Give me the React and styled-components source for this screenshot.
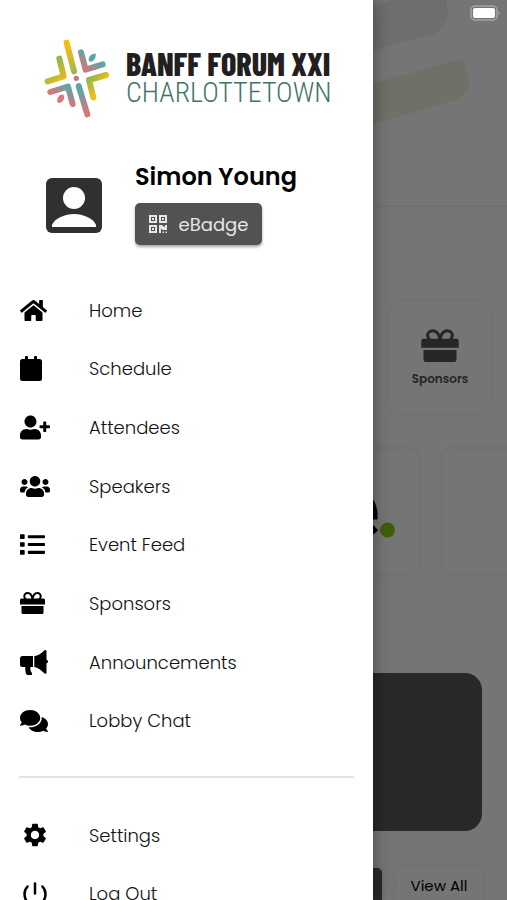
import React from "react";
import styled, { createGlobalStyle } from "styled-components";
import { FaHome, FaUserPlus, FaUsers, FaList, FaComments } from "react-icons/fa";
import { MdSettings } from "react-icons/md";

const GlobalStyle = createGlobalStyle`
  * { box-sizing: border-box; }
  body {
    margin: 0;
    background: #ffffff;
    color: #000000;
    font-family: Poppins, Inter, "Open Sans", sans-serif;
  }
  button, a { font: inherit; color: inherit; }
`;

const Screen = styled.div`
  position: relative;
  height: 100vh;
  overflow: hidden;
`;

/* Event page under the scrim */

const Page = styled.main`
  display: flex;
  flex-direction: column;
  height: 100%;
  overflow: hidden;
`;

const Banner = styled.header`
  display: flex;
  justify-content: flex-end;
  flex: none;
  height: 207px;
  padding-right: 36px;
  border-bottom: 2px solid #f7f7f7;
`;

const Tiles = styled.section`
  display: flex;
  justify-content: flex-end;
  flex: none;
  padding: 95px 17px 0 0;
`;

const Tile = styled.button`
  display: flex;
  flex-direction: column;
  align-items: center;
  justify-content: center;
  gap: 9px;
  width: 100px;
  height: 110px;
  padding: 2px 0 0;
  border: 0;
  border-radius: 10px;
  background: #ffffff;
  box-shadow: 0 0 8px rgba(0, 0, 0, 0.07);
  color: #545454;
  font-size: 12px;
  font-weight: 600;
  line-height: 16px;
`;

const Partners = styled.section`
  display: flex;
  justify-content: flex-end;
  gap: 25px;
  flex: none;
  margin: 37px -110px 0 0;
`;

const Partner = styled.div`
  display: flex;
  align-items: center;
  justify-content: flex-end;
  flex: none;
  width: 174px;
  height: 125px;
  padding: 18px 23px 0 0;
  border-radius: 10px;
  background: #ffffff;
  box-shadow: 0 0 8px rgba(0, 0, 0, 0.07);
`;

const Feature = styled.section`
  flex: none;
  height: 158px;
  margin: 99px 25px 0;
  border-radius: 17px;
  background: #595959;
`;

const Actions = styled.div`
  display: flex;
  justify-content: flex-end;
  gap: 14px;
  flex: none;
  margin: 37px 25px 0;
`;

const Action = styled.button`
  width: ${(p) => (p.$dark ? "120px" : "86px")};
  height: 36px;
  padding: 0;
  border: 0;
  border-radius: 5px;
  background: ${(p) => (p.$dark ? "#595959" : "#ffffff")};
  box-shadow: 0 0 8px rgba(0, 0, 0, 0.07);
  font-size: 15px;
  line-height: 20px;
`;

/* Layers over the page */

const Scrim = styled.div`
  position: absolute;
  inset: 0;
  background: rgba(0, 0, 0, 0.54);
`;

const Battery = styled.svg`
  position: absolute;
  top: 5px;
  right: 6px;
`;

const Drawer = styled.aside`
  position: absolute;
  top: 0;
  bottom: 0;
  left: 0;
  width: 373px;
  max-width: 85%;
  overflow: hidden;
  background: #ffffff;
  box-shadow: 0 0 16px rgba(0, 0, 0, 0.4);
`;

const Brand = styled.div`
  display: flex;
  align-items: center;
  gap: 16px;
  padding: 39px 0 0 43px;
`;

const BrandText = styled.div`
  padding-bottom: 2px;
  white-space: nowrap;
`;

const BrandName = styled.div`
  color: #231f20;
  font-family: "Barlow Condensed", "Roboto Condensed", "Liberation Sans Narrow", sans-serif;
  font-size: 32px;
  font-weight: 800;
  line-height: 30px;
`;

const BrandPlace = styled.div`
  color: #3f7467;
  font-family: "Roboto Condensed", "Liberation Sans Narrow", sans-serif;
  font-size: 28px;
  font-weight: 300;
  line-height: 30px;
`;

const Profile = styled.section`
  display: flex;
  align-items: flex-end;
  gap: 33px;
  padding: 42px 0 0 46px;
`;

const ProfileText = styled.div`
  display: flex;
  flex-direction: column;
  align-items: flex-start;
  gap: 9px;
`;

const Name = styled.h1`
  margin: 0;
  font-size: 24px;
  font-weight: 600;
  line-height: 34px;
`;

const BadgeButton = styled.button`
  display: flex;
  align-items: center;
  justify-content: center;
  gap: 12px;
  width: 127px;
  height: 42px;
  padding: 0;
  border: 0;
  border-radius: 5px;
  background: #525252;
  box-shadow: 0 2px 3px rgba(0, 0, 0, 0.35);
  && { color: #e6e6e6; }
  font-size: 18px;
  font-weight: 400;
`;

const Menu = styled.nav`
  display: grid;
  grid-auto-rows: 1fr;
  height: ${(p) => p.$height};
  margin-top: ${(p) => p.$top};
`;

const MenuLink = styled.a`
  display: grid;
  grid-template-columns: 69px 1fr;
  align-items: center;
  padding-left: 20px;
  color: #111111;
  font-size: 18px;
  font-weight: 300;
  text-decoration: none;
`;

const MenuIcon = styled.span`
  display: flex;
  justify-content: ${(p) => (p.$centered ? "center" : "flex-start")};
  width: 30px;
  color: #000000;
`;

const Divider = styled.hr`
  height: 2px;
  margin: 26px 19px 0;
  border: 0;
  background: #e4e4e4;
`;

const BrandMark = () => (
  <svg width="67" height="79" viewBox="38 28 201 237" fill="none" strokeWidth="18" strokeLinecap="round" strokeLinejoin="round" aria-hidden="true">
    <defs>
      <linearGradient id="ray-n" gradientUnits="userSpaceOnUse" x1="110" y1="60" x2="131" y2="125"><stop stopColor="#f2bb16" /><stop offset="1" stopColor="#9db94c" /></linearGradient>
      <linearGradient id="ray-nw" gradientUnits="userSpaceOnUse" x1="68" y1="105" x2="100" y2="145"><stop stopColor="#93b843" /><stop offset="1" stopColor="#e4bc22" /></linearGradient>
      <linearGradient id="ray-ne" gradientUnits="userSpaceOnUse" x1="190" y1="85" x2="164" y2="120"><stop stopColor="#5ca6a9" /><stop offset="1" stopColor="#d5757b" /></linearGradient>
      <linearGradient id="ray-se" gradientUnits="userSpaceOnUse" x1="177" y1="150" x2="207" y2="175"><stop stopColor="#97b84a" /><stop offset="1" stopColor="#ecbe18" /></linearGradient>
      <linearGradient id="ray-sw" gradientUnits="userSpaceOnUse" x1="113" y1="170" x2="90" y2="203"><stop stopColor="#5ca6a9" /><stop offset="1" stopColor="#d9767c" /></linearGradient>
      <linearGradient id="ray-s" gradientUnits="userSpaceOnUse" x1="145" y1="180" x2="171" y2="250"><stop stopColor="#5ca6a9" /><stop offset="1" stopColor="#db757a" /></linearGradient>
    </defs>
    <path stroke="url(#ray-n)" d="M109 39 131 125" />
    <path stroke="url(#ray-nw)" d="M87 87 100 140 52 155" />
    <path stroke="url(#ray-ne)" d="M152 68 166 120 217 104" />
    <path stroke="url(#ray-se)" d="M227 136 176 151 189 203" />
    <path stroke="url(#ray-sw)" d="M60 187 113 171 127 223" />
    <path stroke="url(#ray-s)" d="M145 169 171 254" />
    <circle cx="138" cy="146" r="8" fill="#c4797f" />
    <path fill="#5ca6a9" d="M175 92C174 79 184 71 196 72 198 84 190 97 179 96Z" />
    <path fill="#d9767c" d="M81 217C79 204 88 193 99 195 106 204 98 219 85 220Z" />
  </svg>
);

const Gift = ({ size }) => (
  <svg width={size} height={Math.round(size * 0.88)} viewBox="0 0 25 22" fill="currentColor" aria-hidden="true">
    <path d="M12.500 7.500C12 4 10.500 1.100 7.700 1.100 5.500 1.100 4 2.600 4.300 4.700 4.500 6 5.200 7 6 7.500M12.500 7.500C13 4 14.500 1.100 17.300 1.100 19.500 1.100 21 2.600 20.700 4.700 20.500 6 19.800 7 19 7.500" fill="none" stroke="currentColor" strokeWidth="2" />
    <path d="M1.500 6.500h22A1.500 1.500 0 0 1 25 8v4.500H0V8a1.500 1.500 0 0 1 1.500-1.500ZM1.500 14h22v6.500A1.500 1.500 0 0 1 22 22H3a1.500 1.500 0 0 1-1.500-1.500Z" />
  </svg>
);

const Calendar = () => (
  <svg width="22" height="25" viewBox="0 0 22 25" fill="currentColor" aria-hidden="true">
    <path d="M2.500 3H5V1a1 1 0 0 1 1-1h1a1 1 0 0 1 1 1v2h6V1a1 1 0 0 1 1-1h1a1 1 0 0 1 1 1v2h2.500A2.500 2.500 0 0 1 22 5.500v17A2.500 2.500 0 0 1 19.500 25h-17A2.500 2.500 0 0 1 0 22.500v-17A2.500 2.500 0 0 1 2.500 3Z" />
  </svg>
);

const Horn = () => (
  <svg width="28" height="25" viewBox="0 0 28 25" fill="currentColor" aria-hidden="true">
    <path d="M2.500 6H13v11h-2.500c-.4 3 .2 4.300 1.400 6 .5.900 0 2-1 2H7.200C6 25 5 20.500 5.300 17H2.500A2.500 2.500 0 0 1 0 14.500v-6A2.500 2.500 0 0 1 2.500 6ZM14.300 6C18 5.600 21.500 3.200 24.300.4c.8-.8 2.200-.5 2.200.8v8.500c2 .5 2 3.300 0 3.800v9c0 1.300-1.400 1.600-2.200.8C21.500 20.400 18 17.500 14.300 17Z" />
  </svg>
);

const Power = () => (
  <svg width="24" height="24" viewBox="0 0 24 24" fill="none" stroke="currentColor" strokeWidth="2.500" strokeLinecap="round" aria-hidden="true">
    <path d="M12 1.500v10M4.500 4.500C-.5 10 .5 22.500 12 22.700 23.500 22.500 24.500 10 19.500 4.500" />
  </svg>
);

const Portrait = () => (
  <svg width="56" height="67" viewBox="0 0 56 67" aria-hidden="true">
    <rect width="56" height="55" rx="6" fill="#303030" />
    <circle cx="28" cy="20" r="11" fill="#ffffff" />
    <path fill="#ffffff" d="M6 49v-2C9 40 19 36 28 36s19 4 22 11v2Z" />
  </svg>
);

const QrCode = () => (
  <svg width="18" height="18" viewBox="0 0 18 18" fill="none" stroke="currentColor" strokeWidth="2" aria-hidden="true">
    <path d="M1 1h6v6H1ZM11 1h6v6h-6ZM1 11h6v6H1Z" />
    <path d="M3 4h2M13 4h2M3 14h2" />
    <path fill="currentColor" stroke="none" d="M10 10h3l1.500 1.500H16V10h2v5h-4.500l-1.500-1.500V18h-2Zm3.500 6.500H15V18h-1.500Zm3 0H18V18h-1.500Z" />
  </svg>
);

const mainLinks = [
  ["Home", <FaHome size={27} />],
  ["Schedule", <Calendar />],
  ["Attendees", <FaUserPlus size={31} />],
  ["Speakers", <FaUsers size={31} />],
  ["Event Feed", <FaList size={25} />],
  ["Sponsors", <Gift size={25} />],
  ["Announcements", <Horn />],
  ["Lobby Chat", <FaComments size={28} />],
];

const accountLinks = [
  ["Settings", <MdSettings size={28} />],
  ["Log Out", <Power />],
];

const renderLinks = (links, centered) =>
  links.map(([label, icon]) => (
    <MenuLink key={label} href="#">
      <MenuIcon $centered={centered}>{icon}</MenuIcon>
      {label}
    </MenuLink>
  ));

export default function App() {
  return (
    <Screen>
      <GlobalStyle />
      <Page>
        <Banner>
          <svg width="180" height="160" viewBox="0 0 180 160" aria-hidden="true">
            <path fill="#edf1f1" d="M-20 35 120-5H155L157 12Q157 26 143 34L-20 78Z" />
            <path fill="#f3f2e2" d="M-20 112 166 60Q173 58 175 68L178 83Q178 95 166 100L-20 152Z" />
          </svg>
        </Banner>
        <Tiles>
          <Tile>
            <Gift size={38} />
            Sponsors
          </Tile>
        </Tiles>
        <Partners>
          <Partner>
            <svg width="60" height="60" viewBox="0 0 60 60" aria-hidden="true">
              <path fill="none" stroke="#000000" strokeWidth="9" d="M2 24H38C38 -3 2 -3 2 24 2 48 28 48 40 36" />
              <circle cx="52.500" cy="39" r="7.500" fill="#8acd17" />
            </svg>
          </Partner>
          <Partner />
        </Partners>
        <Feature />
        <Actions>
          <Action $dark aria-label="Feature" />
          <Action>View All</Action>
        </Actions>
      </Page>
      <Scrim />
      <Battery width="31" height="16" viewBox="0 0 31 16" aria-label="Battery full">
        <rect x="1" y="1" width="26" height="14" rx="4" fill="none" stroke="#a5a5a5" strokeWidth="1.500" />
        <rect x="3" y="3" width="22" height="10" rx="2" fill="#ffffff" />
        <path fill="#a5a5a5" d="M28.500 6q3 2 0 4Z" />
      </Battery>
      <Drawer>
        <Brand>
          <BrandMark />
          <BrandText>
            <BrandName>BANFF FORUM XXI</BrandName>
            <BrandPlace>CHARLOTTETOWN</BrandPlace>
          </BrandText>
        </Brand>
        <Profile>
          <Portrait />
          <ProfileText>
            <Name>Simon Young</Name>
            <BadgeButton>
              <QrCode />
              eBadge
            </BadgeButton>
          </ProfileText>
        </Profile>
        <Menu $top="36px" $height="469px">
          {renderLinks(mainLinks, false)}
        </Menu>
        <Divider />
        <Menu $top="28px" $height="117px">
          {renderLinks(accountLinks, true)}
        </Menu>
      </Drawer>
    </Screen>
  );
}
